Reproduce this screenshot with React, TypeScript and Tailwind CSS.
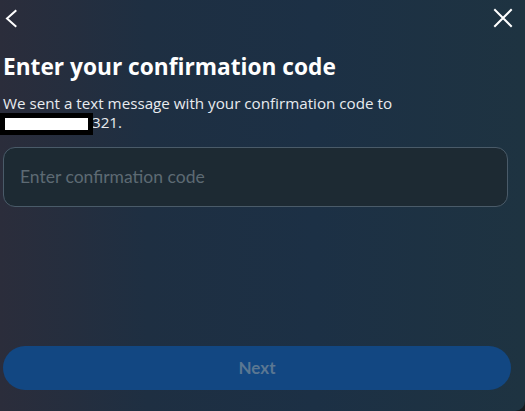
import React from "react";

export default function App() {
  return (
    <div className="w-[525px] h-[411px] bg-[#161b20]">
      <div
        className="relative w-[525px] h-[411px] rounded-br-[10px] flex flex-col px-[3px] bg-[linear-gradient(90deg,#2b2d3b_0%,#1e2f42_28%,#1c3045_60%,#1e3341_100%)]"
        style={{ fontFamily: "'Open Sans', 'Noto Sans', sans-serif" }}
      >
        <div className="flex justify-between items-start pt-[6px] -ml-[3px] pr-[7px]">
          <svg width="24" height="24" viewBox="0 0 24 24" fill="none">
            <path d="M15.5 5 L7 12.5 L15.5 20" stroke="#ffffff" strokeWidth="2" strokeLinecap="square" strokeLinejoin="miter" />
          </svg>
          <svg width="24" height="24" viewBox="0 0 24 24" fill="none">
            <path d="M4 4 L20 20 M20 4 L4 20" stroke="#ffffff" strokeWidth="2" strokeLinecap="square" />
          </svg>
        </div>

        <h1 className="mt-[23px] text-[22.7px] leading-[28px] font-bold text-white">
          Enter your confirmation code
        </h1>

        <div className="mt-[13px] text-[15.2px] leading-[19px] text-[#e8ebef]">
          <div>We sent a text message with your confirmation code to</div>
          <div className="relative">
            <span className="inline-block w-[89px]" />
            321.
            <div className="absolute left-[-3px] top-0 w-[93px] h-[22px] bg-black">
              <div className="absolute left-[5px] top-[5px] w-[83px] h-[12px] bg-white" />
            </div>
          </div>
        </div>

        <div
          className="mt-[15px] w-[505px] h-[60px] rounded-[12px] border border-[#4a5b69] bg-[#1d2a33] flex items-center pl-[16px]"
          style={{ fontFamily: "Lato, 'Noto Sans', sans-serif" }}
        >
          <span className="text-[17.5px] text-[#5d6a73]">Enter confirmation code</span>
        </div>

        <button
          className="mt-[139px] w-[508px] h-[44px] rounded-full bg-[#124782] flex items-center justify-center text-[17px] font-bold text-[#5b7792]"
          style={{ fontFamily: "Lato, 'Noto Sans', sans-serif" }}
        >
          Next
        </button>
      </div>
    </div>
  );
}
